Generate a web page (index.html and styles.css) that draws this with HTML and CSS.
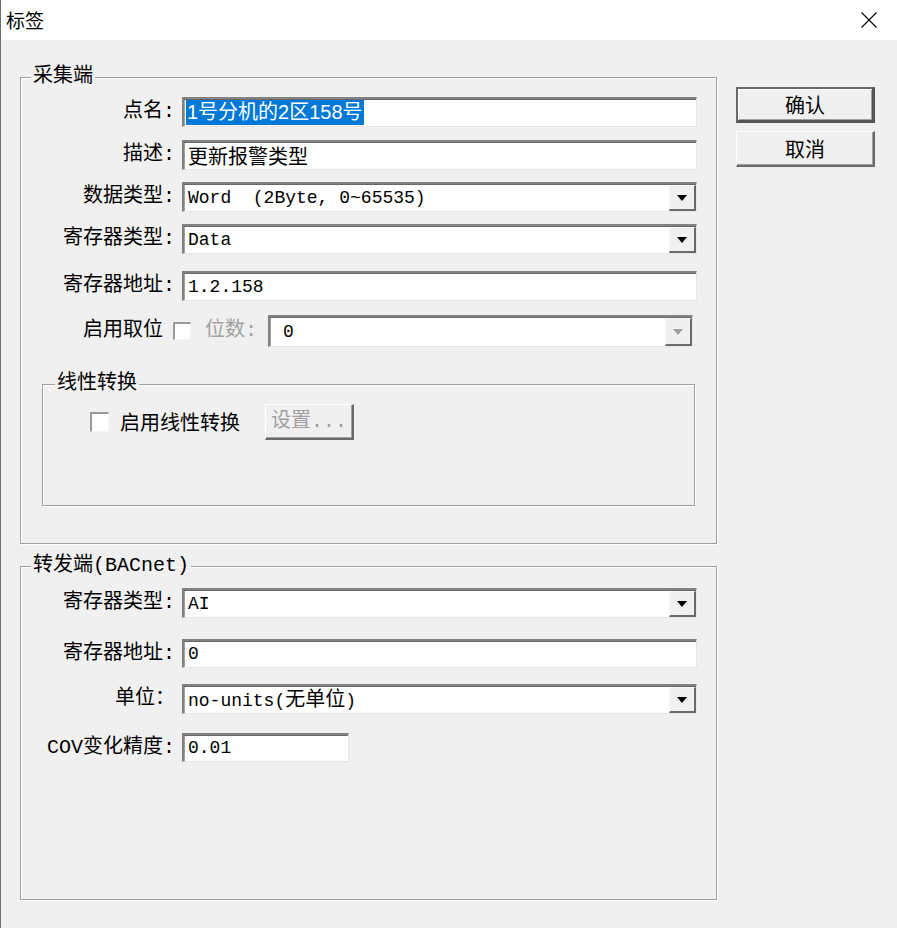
FILE: index.html
```html
<!DOCTYPE html>
<html lang="zh-CN">
<head>
<meta charset="utf-8">
<title>标签</title>
<link rel="stylesheet" href="styles.css">
</head>
<body>
<div class="window">
  <div class="titlebar">
    <span class="title">标签</span>
    <svg class="close" viewBox="0 0 16 16" width="16" height="16"><path d="M0.5 0.5 L15.5 15.5 M15.5 0.5 L0.5 15.5" stroke="#000" stroke-width="1.1" fill="none"/></svg>
  </div>
  <div class="client">
    <div class="main">
      <fieldset class="group g1">
        <legend>采集端</legend>
        <div class="row r1"><span class="lbl">点名:</span><div class="edit field"><span class="hl">1号分机的2区158号</span></div></div>
        <div class="row r2"><span class="lbl">描述:</span><div class="edit field"><span class="cjk">更新报警类型</span></div></div>
        <div class="row r3"><span class="lbl">数据类型:</span><div class="combo field"><span class="val">Word&nbsp;&nbsp;(2Byte,&nbsp;0~65535)</span><span class="drop"><i class="tri"></i></span></div></div>
        <div class="row r4"><span class="lbl">寄存器类型:</span><div class="combo field"><span class="val">Data</span><span class="drop"><i class="tri"></i></span></div></div>
        <div class="row r5"><span class="lbl">寄存器地址:</span><div class="edit field"><span class="val">1.2.158</span></div></div>
        <div class="row r6">
          <span class="lbl short">启用取位</span>
          <span class="check"></span>
          <span class="dis">位数:</span>
          <div class="combo bits"><span class="val">0</span><span class="drop off"><i class="tri"></i></span></div>
        </div>
        <fieldset class="group lin">
          <legend>线性转换</legend>
          <div class="linrow">
            <span class="check big"></span>
            <span class="cklbl">启用线性转换</span>
            <span class="btn disabled">设置...</span>
          </div>
        </fieldset>
      </fieldset>
      <fieldset class="group g2">
        <legend>转发端(BACnet)</legend>
        <div class="row s1"><span class="lbl">寄存器类型:</span><div class="combo field"><span class="val">AI</span><span class="drop"><i class="tri"></i></span></div></div>
        <div class="row s2"><span class="lbl">寄存器地址:</span><div class="edit field"><span class="val">0</span></div></div>
        <div class="row s3"><span class="lbl">单位：</span><div class="combo field"><span class="val">no-units(<span class="cjk">无单位</span>)</span><span class="drop"><i class="tri"></i></span></div></div>
        <div class="row s4"><span class="lbl">COV变化精度:</span><div class="edit cov"><span class="val">0.01</span></div></div>
      </fieldset>
    </div>
    <div class="buttons">
      <span class="btn default">确认</span>
      <span class="btn">取消</span>
    </div>
  </div>
</div>
</body>
</html>
```
FILE: styles.css
```css
* { box-sizing: border-box; }
html, body { margin: 0; padding: 0; }
body {
  width: 897px;
  height: 928px;
  overflow: hidden;
  background: #f0f0f0;
  color: #000;
  font-family: "Liberation Mono", "Noto Sans CJK SC", monospace;
  font-size: 20px;
}
.window {
  width: 897px;
  height: 928px;
  border-left: 1px solid #6e6e6e;
  background: #f0f0f0;
}
.titlebar {
  height: 40px;
  background: #fff;
  display: flex;
  align-items: center;
  justify-content: space-between;
  padding: 0 20px 0 5px;
}
.title {
  font-family: "Noto Sans CJK SC", sans-serif;
  font-size: 19px;
  line-height: 24px;
}
.close { display: block; }

.client {
  display: flex;
  padding: 24px 0 0 19px;
  gap: 19px;
}
.main {
  width: 697px;
  display: flex;
  flex-direction: column;
}

.group {
  margin: 0;
  padding: 0;
  min-width: 0;
  border: 1px solid #a0a0a0;
  box-shadow: inset 1px 1px 0 #fff, 1px 1px 0 #fff;
}
.group > legend {
  margin-left: 10px;
  padding: 0 2px;
  font-size: 20px;
  line-height: 26px;
}
.group.g1 { padding-bottom: 37px; }
.group.g2 { margin-top: 9px; padding-bottom: 137px; }

.row {
  display: flex;
  align-items: center;
  height: 30px;
}
.lbl {
  width: 154px;
  text-align: right;
  white-space: nowrap;
  line-height: 24px;
  flex: none;
}
.lbl.short { width: 142px; }

.r1 { margin-top: 7px; }
.r2 { margin-top: 13px; }
.r3 { margin-top: 12px; }
.r4 { margin-top: 12px; }
.r5 { margin-top: 17px; }
.r6 { margin-top: 14px; height: 32px; }
.s1 { margin-top: 9px; }
.s2 { margin-top: 21px; height: 29px; }
.s3 { margin-top: 16px; }
.s4 { margin-top: 19px; height: 29px; }

.edit, .combo {
  position: relative;
  display: flex;
  align-items: center;
  height: 100%;
  background: #fff;
  border-style: solid;
  border-width: 2px 1px 1px 2px;
  border-color: #828282 #e6e6e6 #e6e6e6 #828282;
  box-shadow: inset 0 1px 0 #6a6a6a, inset 1px 0 0 #a0a0a0;
  padding-left: 4px;
  white-space: nowrap;
  overflow: hidden;
}
.field { margin-left: 7px; width: 515px; flex: none; }
.cov { margin-left: 7px; width: 167px; flex: none; }
.val {
  font-family: "Liberation Mono", "Noto Sans CJK SC", monospace;
  font-size: 18px;
  line-height: 24px;
}
.cjk {
  font-family: "Noto Sans CJK SC", sans-serif;
  font-size: 20px;
  line-height: 24px;
}
.hl {
  display: inline-block;
  margin-left: -2px;
  background: #0078d7;
  color: #fff;
  font-family: "Liberation Sans", "Noto Sans CJK SC", sans-serif;
  font-size: 20px;
  line-height: 25px;
  padding: 0 1px;
}

.drop {
  position: absolute;
  top: 1px;
  right: 0;
  bottom: 0;
  width: 27px;
  background: #f0f0f0;
  border-style: solid;
  border-width: 1px 2px 2px 1px;
  border-color: #f8f8f8 #6a6a6a #6a6a6a #f8f8f8;
  display: flex;
  align-items: center;
  justify-content: center;
}
.tri {
  display: block;
  width: 0;
  height: 0;
  border-left: 5px solid transparent;
  border-right: 5px solid transparent;
  border-top: 6px solid #000;
}
.drop.off .tri { border-top-color: #a0a0a0; }

.check {
  flex: none;
  width: 18px;
  height: 18px;
  margin-left: 10px;
  background: #fff;
  border-style: solid;
  border-width: 2px 1px 1px 2px;
  border-color: #9a9a9a #f4f4f4 #f4f4f4 #9a9a9a;
}
.check.big { width: 19px; height: 20px; margin-left: 47px; }
.dis {
  margin-left: 14px;
  color: #a0a0a0;
  line-height: 24px;
  white-space: nowrap;
}
.combo.bits {
  margin-left: 11px;
  width: 425px;
  flex: none;
  padding-left: 13px;
}

.group.lin {
  margin: 24px 21px 0 21px;
  padding-bottom: 65px;
}
.group.lin > legend { margin-left: 12px; }
.linrow {
  display: flex;
  align-items: center;
  margin-top: 7px;
  height: 36px;
}
.cklbl {
  margin-left: 11px;
  line-height: 24px;
  font-family: "Noto Sans CJK SC", sans-serif;
}

.btn {
  display: flex;
  align-items: center;
  justify-content: center;
  height: 36px;
  background: #f0f0f0;
  font-family: "Noto Sans CJK SC", sans-serif;
  font-size: 20px;
  line-height: 24px;
  border-style: solid;
  border-width: 1px 2px 2px 1px;
  border-color: #fff #6a6a6a #6a6a6a #fff;
  box-shadow: inset -1px -1px 0 #a0a0a0;
}
.btn.disabled {
  margin-left: 25px;
  width: 89px;
  color: #a0a0a0;
  font-family: "Liberation Mono", "Noto Sans CJK SC", monospace;
}
.buttons {
  display: flex;
  flex-direction: column;
  gap: 8px;
  padding-top: 23px;
  width: 139px;
}
.btn.default {
  border-width: 2px 3px 3px 2px;
  border-color: #6a6a6a #555 #555 #6a6a6a;
  box-shadow: inset 1px 1px 0 #fff, inset -1px -1px 0 #a0a0a0;
}
```
